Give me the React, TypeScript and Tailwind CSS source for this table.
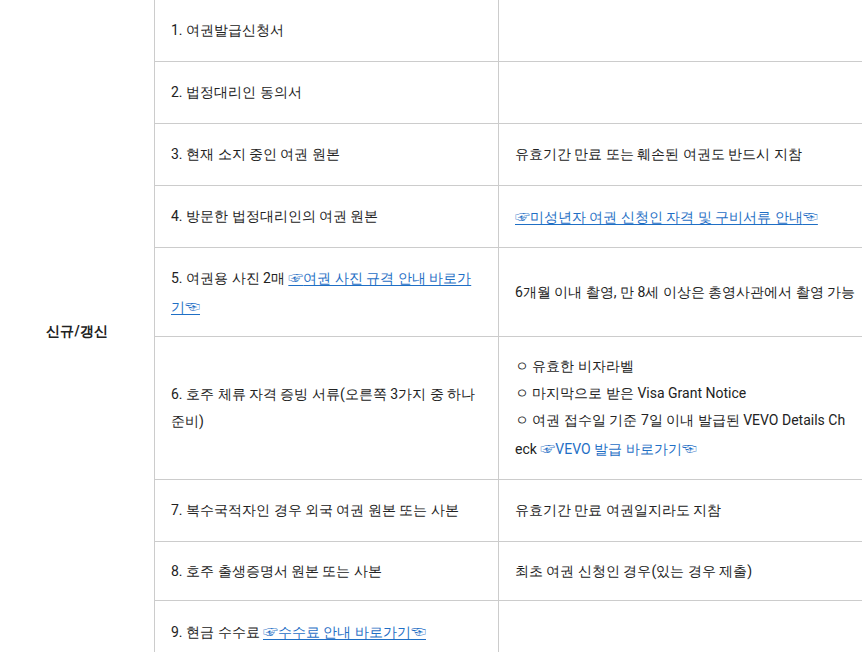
import React from "react";

type Row = {
    h: string;
    left: React.ReactNode;
    right?: React.ReactNode;
};

const Hand = ({ c }: { c: string }) => (
    <span className="font-['Noto_Sans_CJK_KR',sans-serif] text-[15px]">{c}</span>
);

const Guide = ({ text, plain = false }: { text: string; plain?: boolean }) => (
    <a
        href="#"
        className={plain ? "text-[#1f6fc5] no-underline" : "text-[#1f6fc5] underline underline-offset-2"}
    >
        <Hand c="☞" />{text}<Hand c="☜" />
    </a>
);

const rows: Row[] = [
    { h: "h-[62px]", left: "1. 여권발급신청서" },
    { h: "h-[62px]", left: "2. 법정대리인 동의서" },
    { h: "h-[62px]", left: "3. 현재 소지 중인 여권 원본", right: "유효기간 만료 또는 훼손된 여권도 반드시 지참" },
    { h: "h-[62px]", left: "4. 방문한 법정대리인의 여권 원본", right: <Guide text="미성년자 여권 신청인 자격 및 구비서류 안내" /> },
    {
        h: "h-[89px]",
        left: <>5. 여권용 사진 2매 <Guide text="여권 사진 규격 안내 바로가기" /></>,
        right: <span className="whitespace-nowrap">6개월 이내 촬영, 만 8세 이상은 총영사관에서 촬영 가능</span>,
    },
    {
        h: "h-[143px]",
        left: "6. 호주 체류 자격 증빙 서류(오른쪽 3가지 중 하나 준비)",
        right: (
            <>
                ㅇ 유효한 비자라벨<br />
                ㅇ 마지막으로 받은 Visa Grant Notice<br />
                ㅇ 여권 접수일 기준 7일 이내 발급된 VEVO Details Ch<br />
                eck <Guide text="VEVO 발급 바로가기" plain />
            </>
        ),
    },
    { h: "h-[62px]", left: "7. 복수국적자인 경우 외국 여권 원본 또는 사본", right: "유효기간 만료 여권일지라도 지참" },
    { h: "h-[59px]", left: "8. 호주 출생증명서 원본 또는 사본", right: "최초 여권 신청인 경우(있는 경우 제출)" },
    { h: "h-[62px]", left: <>9. 현금 수수료 <Guide text="수수료 안내 바로가기" /></> },
];

export default function App() {
    return (
        <div className="w-[862px] h-[652px] overflow-hidden bg-white text-[14px] leading-[27px] text-[#222] font-[Roboto,'Noto_Sans',sans-serif]">
            <div className="grid w-[868px] grid-cols-[154px_344px_370px]">
                <div className="row-span-9 flex items-center justify-center font-bold">
                    신규/갱신
                </div>
                {rows.map((r, i) => (
                    <React.Fragment key={i}>
                        <div className={`${r.h} flex items-center border-l border-b border-[#cccccc] px-4 break-all`}>
                            <div>{r.left}</div>
                        </div>
                        <div className={`${r.h} flex items-center border-l border-b border-[#cccccc] pl-4 pr-1 break-all`}>
                            <div>{r.right}</div>
                        </div>
                    </React.Fragment>
                ))}
            </div>
        </div>
    );
}
